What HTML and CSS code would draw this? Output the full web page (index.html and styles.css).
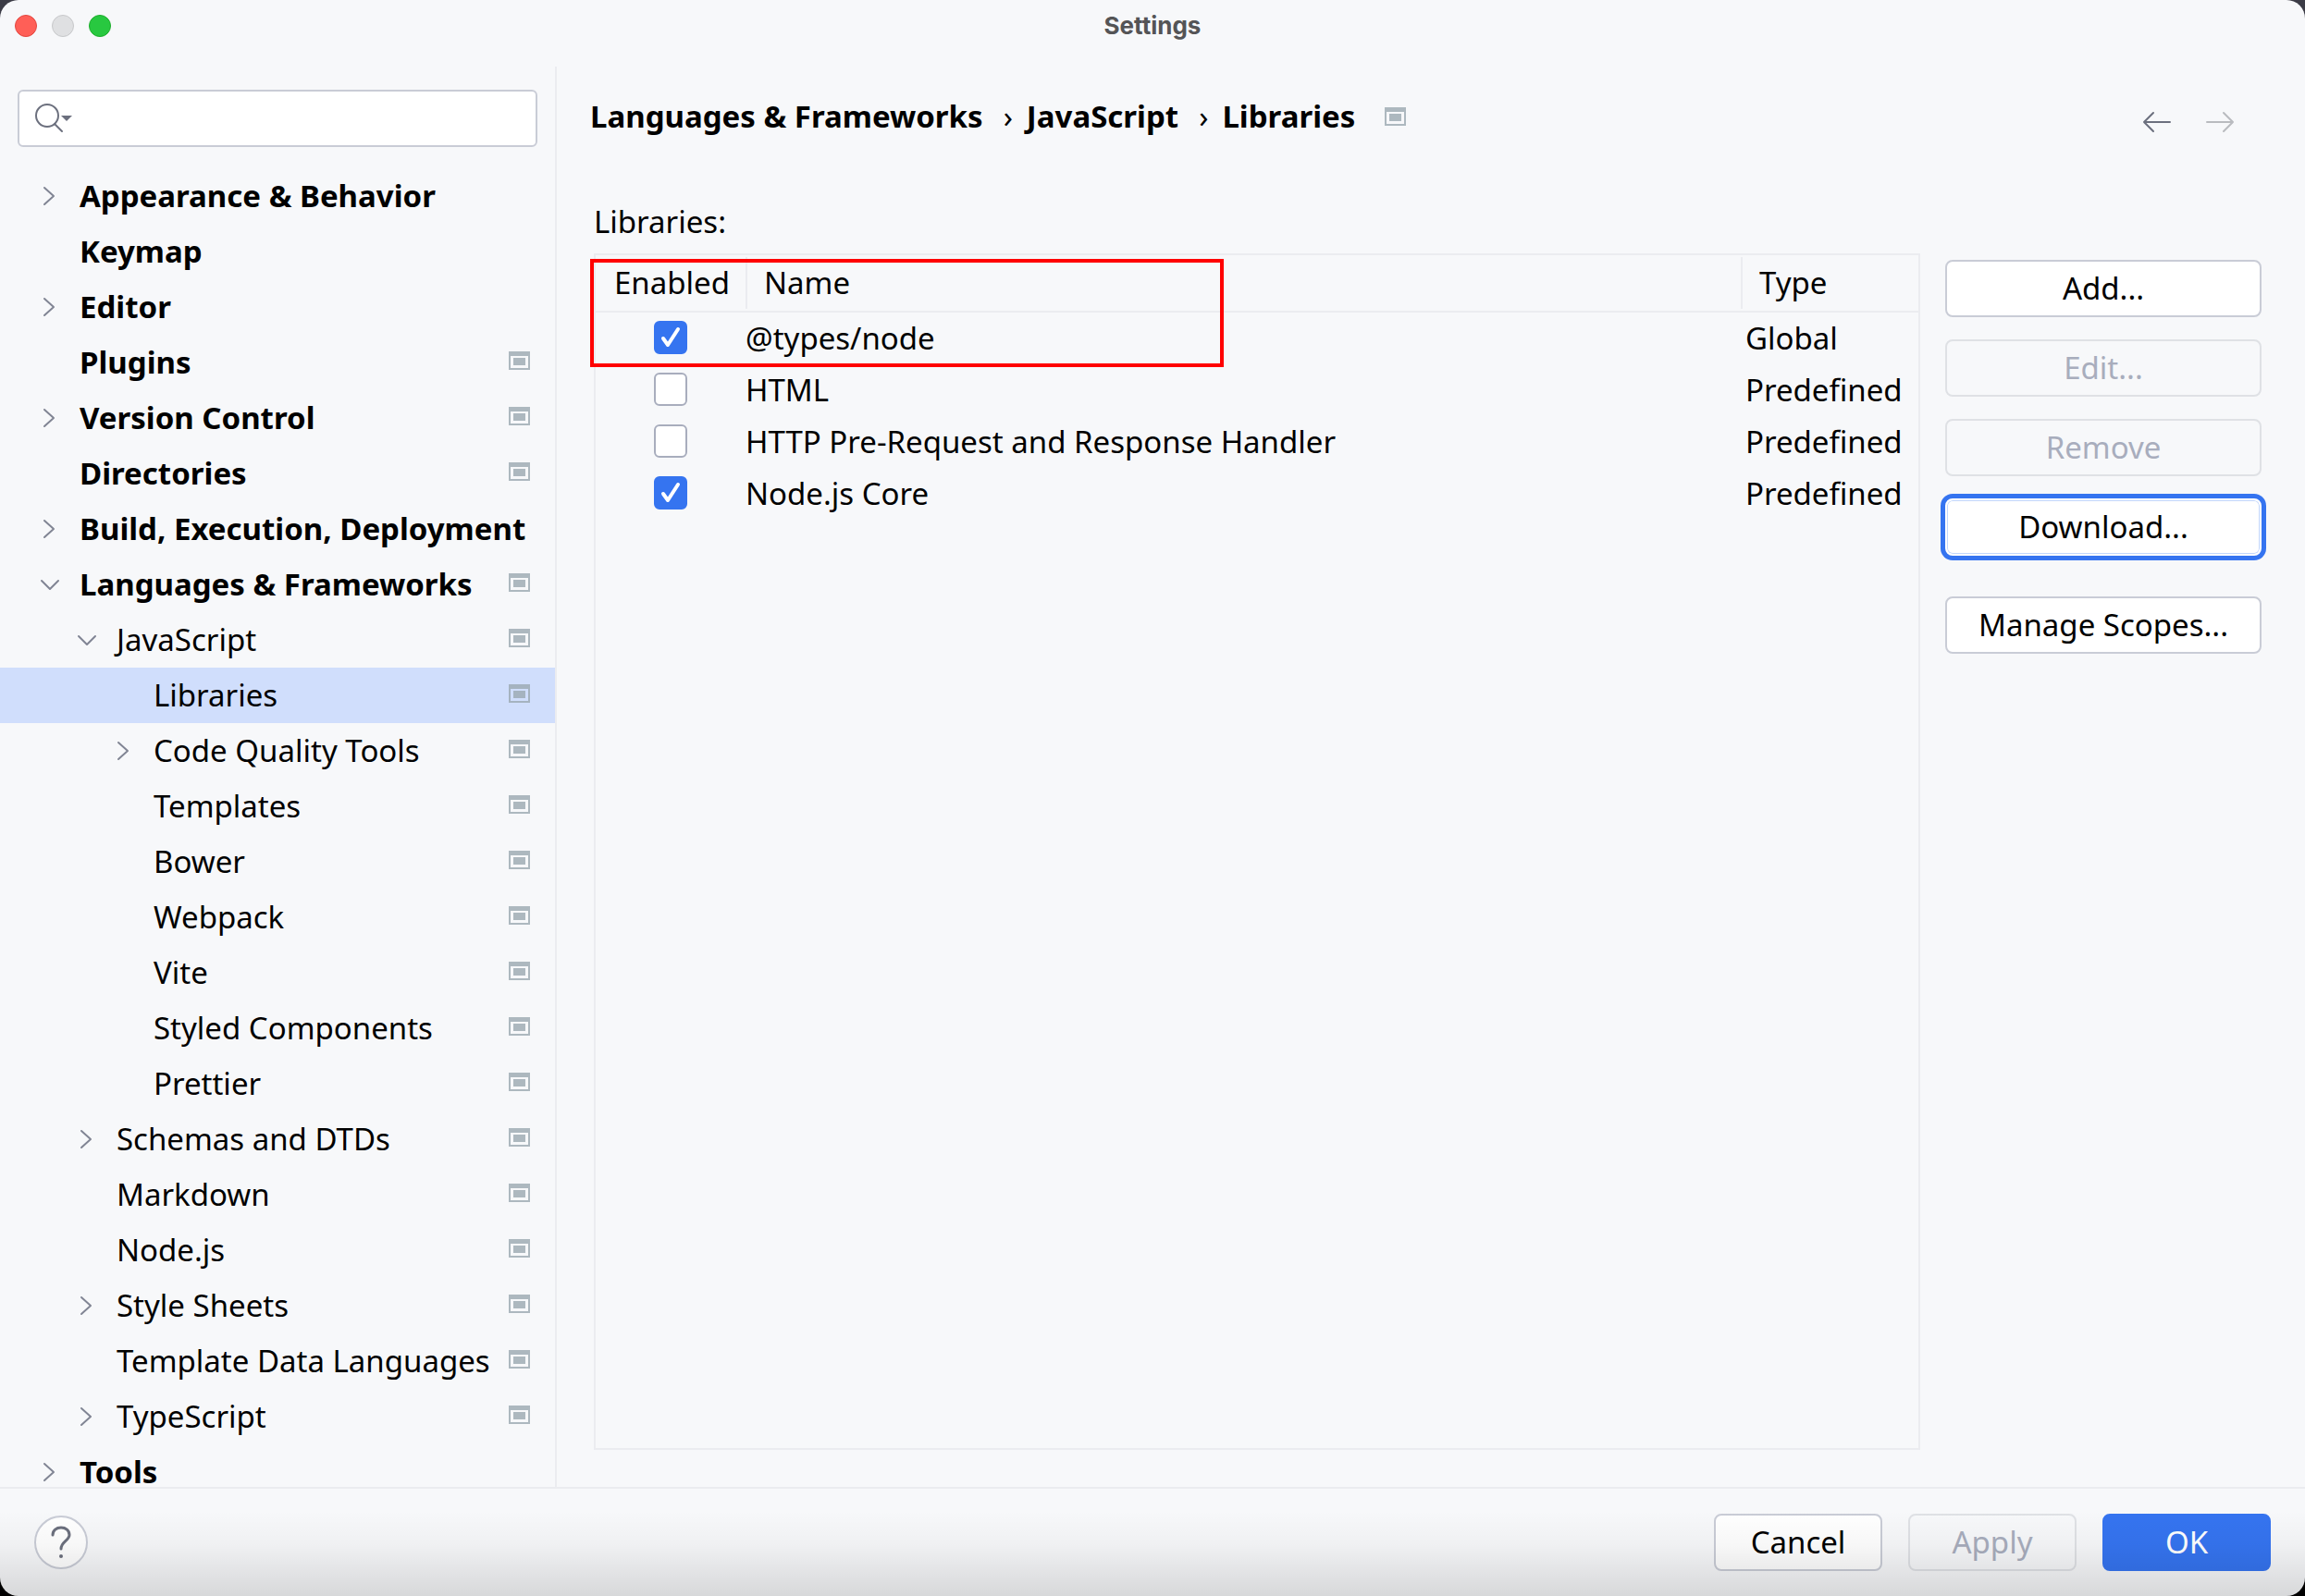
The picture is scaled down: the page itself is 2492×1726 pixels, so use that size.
FILE: index.html
```html
<!DOCTYPE html>
<html lang="en">
<head>
<meta charset="utf-8">
<title>Settings</title>
<link rel="stylesheet" href="styles.css">
</head>
<body>
<svg class="sprite" aria-hidden="true">
  <symbol id="right" viewBox="0 0 24 24"><path d="M6 3l10 9-10 9" fill="none" stroke="#818594" stroke-width="2" stroke-linecap="round" stroke-linejoin="round"/></symbol>
  <symbol id="down" viewBox="0 0 24 24"><path d="M3 8l9 9 9-9" fill="none" stroke="#818594" stroke-width="2" stroke-linecap="round" stroke-linejoin="round"/></symbol>
  <symbol id="project" viewBox="0 0 24 20"><path d="M0 0h23v20H0zM2 5v13h19V5z" fill="#9aa7b0" fill-opacity=".8" fill-rule="evenodd"/><path d="M5 7h13v8H5z" fill="#9aa7b0" fill-opacity=".8"/></symbol>
</svg>
<div class="window">
  <header class="titlebar">
    <div class="lights"><button class="light close" aria-label="Close"></button><button class="light minimize" aria-label="Minimize"></button><button class="light zoom" aria-label="Zoom"></button></div>
    <h1 class="title">Settings</h1>
  </header>
  <div class="body">
    <nav class="sidebar" aria-label="Settings categories">
      <div class="search">
        <svg class="search-icon" viewBox="0 0 42 32" aria-hidden="true"><circle cx="13" cy="13" r="12" fill="none" stroke="#6c707e" stroke-width="2"/><path d="M21 22l8 8" stroke="#6c707e" stroke-width="2" stroke-linecap="round"/><path d="M28 13h12l-6 6z" fill="#6c707e"/></svg>
        <input class="search-input" type="text" aria-label="Search settings">
      </div>
      <ul class="tree">
        <li class="row top"><svg class="chev"><use href="#right"/></svg><a href="#">Appearance &amp; Behavior</a></li>
        <li class="row top"><span class="chev"></span><a href="#">Keymap</a></li>
        <li class="row top"><svg class="chev"><use href="#right"/></svg><a href="#">Editor</a></li>
        <li class="row top"><span class="chev"></span><a href="#">Plugins</a><svg class="proj"><use href="#project"/></svg></li>
        <li class="row top"><svg class="chev"><use href="#right"/></svg><a href="#">Version Control</a><svg class="proj"><use href="#project"/></svg></li>
        <li class="row top"><span class="chev"></span><a href="#">Directories</a><svg class="proj"><use href="#project"/></svg></li>
        <li class="row top"><svg class="chev"><use href="#right"/></svg><a href="#">Build, Execution, Deployment</a></li>
        <li class="row top"><svg class="chev"><use href="#down"/></svg><a href="#">Languages &amp; Frameworks</a><svg class="proj"><use href="#project"/></svg></li>
        <li class="row sub"><svg class="chev"><use href="#down"/></svg><a href="#">JavaScript</a><svg class="proj"><use href="#project"/></svg></li>
        <li class="row leaf selected"><span class="chev"></span><a href="#" aria-current="page">Libraries</a><svg class="proj"><use href="#project"/></svg></li>
        <li class="row leaf"><svg class="chev"><use href="#right"/></svg><a href="#">Code Quality Tools</a><svg class="proj"><use href="#project"/></svg></li>
        <li class="row leaf"><span class="chev"></span><a href="#">Templates</a><svg class="proj"><use href="#project"/></svg></li>
        <li class="row leaf"><span class="chev"></span><a href="#">Bower</a><svg class="proj"><use href="#project"/></svg></li>
        <li class="row leaf"><span class="chev"></span><a href="#">Webpack</a><svg class="proj"><use href="#project"/></svg></li>
        <li class="row leaf"><span class="chev"></span><a href="#">Vite</a><svg class="proj"><use href="#project"/></svg></li>
        <li class="row leaf"><span class="chev"></span><a href="#">Styled Components</a><svg class="proj"><use href="#project"/></svg></li>
        <li class="row leaf"><span class="chev"></span><a href="#">Prettier</a><svg class="proj"><use href="#project"/></svg></li>
        <li class="row sub"><svg class="chev"><use href="#right"/></svg><a href="#">Schemas and DTDs</a><svg class="proj"><use href="#project"/></svg></li>
        <li class="row sub"><span class="chev"></span><a href="#">Markdown</a><svg class="proj"><use href="#project"/></svg></li>
        <li class="row sub"><span class="chev"></span><a href="#">Node.js</a><svg class="proj"><use href="#project"/></svg></li>
        <li class="row sub"><svg class="chev"><use href="#right"/></svg><a href="#">Style Sheets</a><svg class="proj"><use href="#project"/></svg></li>
        <li class="row sub"><span class="chev"></span><a href="#">Template Data Languages</a><svg class="proj"><use href="#project"/></svg></li>
        <li class="row sub"><svg class="chev"><use href="#right"/></svg><a href="#">TypeScript</a><svg class="proj"><use href="#project"/></svg></li>
        <li class="row top"><svg class="chev"><use href="#right"/></svg><a href="#">Tools</a></li>
      </ul>
    </nav>
    <main class="content">
      <div class="path">
        <a href="#">Languages &amp; Frameworks</a><span class="sep">›</span><a href="#">JavaScript</a><span class="sep">›</span><a href="#">Libraries</a>
        <svg class="proj path-proj"><use href="#project"/></svg>
        <div class="history">
          <button class="arrow" aria-label="Back"><svg viewBox="0 0 32 24"><path d="M30 12H2M12 2L2 12l10 10" fill="none" stroke="#6c707e" stroke-width="2" stroke-linecap="round" stroke-linejoin="round"/></svg></button>
          <button class="arrow" aria-label="Forward" disabled><svg viewBox="0 0 32 24"><path d="M2 12h28M20 2l10 10-10 10" fill="none" stroke="#b9bbbf" stroke-width="2" stroke-linecap="round" stroke-linejoin="round"/></svg></button>
        </div>
      </div>
      <h2 class="label">Libraries:</h2>
      <div class="panel">
        <div class="table-box">
          <table class="table">
            <thead><tr><th class="c-enabled" scope="col"><span>Enabled</span></th><th scope="col"><span>Name</span></th><th class="c-type" scope="col"><span>Type</span></th></tr></thead>
            <tbody>
              <tr><td><input class="check" type="checkbox" id="lib1" checked></td><td><label for="lib1">@types/node</label></td><td>Global</td></tr>
              <tr><td><input class="check" type="checkbox" id="lib2"></td><td><label for="lib2">HTML</label></td><td>Predefined</td></tr>
              <tr><td><input class="check" type="checkbox" id="lib3"></td><td><label for="lib3">HTTP Pre-Request and Response Handler</label></td><td>Predefined</td></tr>
              <tr><td><input class="check" type="checkbox" id="lib4" checked></td><td><label for="lib4">Node.js Core</label></td><td>Predefined</td></tr>
            </tbody>
          </table>
          <div class="marker"></div>
        </div>
        <div class="actions">
          <button class="btn">Add...</button>
          <button class="btn" disabled>Edit...</button>
          <button class="btn" disabled>Remove</button>
          <button class="btn focused">Download...</button>
          <button class="btn scopes">Manage Scopes...</button>
        </div>
      </div>
    </main>
  </div>
  <footer class="footer">
    <button class="help" aria-label="Help"><svg viewBox="0 0 24 36"><path d="M3 10C3 5 7 2 12 2s9 3 9 8c0 6-9 7-9 15" fill="none" stroke="#6c707e" stroke-width="3" stroke-linecap="round"/><circle cx="12" cy="33" r="2" fill="#6c707e"/></svg></button>
    <button class="btn wide">Cancel</button>
    <button class="btn wide" disabled>Apply</button>
    <button class="btn wide primary">OK</button>
  </footer>
</div>
</body>
</html>
```
FILE: styles.css
```css
* { box-sizing: border-box; }
body {
  margin: 0;
  background: linear-gradient(#3c3c46 50%, #000 50%);
  font-family: "Noto Sans", "Open Sans", sans-serif;
  font-size: 33px;
  line-height: 40px;
  color: #000;
}
button, input { font: inherit; color: inherit; margin: 0; padding: 0; }
a { color: inherit; text-decoration: none; white-space: nowrap; }
.sprite { position: absolute; width: 0; height: 0; }

.window {
  position: relative;
  display: flex;
  flex-direction: column;
  height: 100vh;
  background: #f7f8fa;
  border-radius: 20px;
  overflow: hidden;
}
.window::after {
  content: "";
  position: absolute;
  inset: auto 0 0;
  height: 92px;
  background: linear-gradient(rgba(0, 0, 0, 0), rgba(0, 0, 0, .03) 40%, rgba(0, 0, 0, .13));
  pointer-events: none;
}

.titlebar {
  display: grid;
  grid-template-columns: 1fr auto 1fr;
  align-items: center;
  height: 56px;
  padding: 0 16px;
}
.lights { display: flex; gap: 16px; }
.light { width: 24px; height: 24px; border: 1px solid; border-radius: 50%; }
.close { background: #ff5f57; border-color: #e2463f; }
.minimize { background: #dfe0e2; border-color: #c6c7c9; }
.zoom { background: #28c840; border-color: #1dad2b; }
.title { margin: 0; font: 700 26px/32px Inter, sans-serif; color: #545456; }

.body { display: flex; flex: 1; min-height: 0; padding-top: 16px; }
.sidebar {
  display: flex;
  flex-direction: column;
  flex: none;
  width: 602px;
  border-right: 2px solid #ebecf0;
  padding-top: 25px;
  overflow: hidden;
}
.search {
  display: flex;
  flex: none;
  align-items: center;
  height: 62px;
  margin: 0 19px 23px;
  padding-left: 17px;
  border: 2px solid #c9ccd6;
  border-radius: 6px;
  background: #fff;
}
.search-icon { width: 42px; height: 32px; }
.search-input { flex: 1; min-width: 0; border: 0; outline: 0; background: none; }

.tree { list-style: none; margin: 0; padding: 0; }
.row { display: flex; align-items: center; height: 60px; padding: 0 26px 0 42px; line-height: 32px; }
.top { font-weight: 700; }
.sub { padding-left: 82px; }
.leaf { padding-left: 122px; }
.selected { background: #d0defc; }
.chev { flex: none; width: 24px; height: 24px; margin-right: 20px; }
.proj { flex: none; width: 24px; height: 20px; margin: 0 0 4px auto; }

.content { display: flex; flex-direction: column; flex: 1; min-width: 0; padding: 34px 37px 40px 36px; }
.path { display: flex; align-items: center; height: 40px; font-weight: 700; }
.sep { padding: 0 15px 0 22px; font-weight: 400; }
.path-proj { margin: 0 0 0 32px; }
.history { display: flex; gap: 36px; margin-left: auto; padding: 12px 39px 0 0; }
.arrow { width: 32px; height: 24px; border: 0; background: none; }
.arrow svg { display: block; width: 32px; height: 24px; }
.label { margin: 74px 0 14px 4px; font-size: 33px; font-weight: 400; line-height: 40px; }

.panel { display: flex; flex: 1; min-height: 0; gap: 27px; padding-left: 4px; }
.table-box { position: relative; flex: 1; border: 2px solid #ebecf0; }
.table { width: 100%; border-spacing: 0; table-layout: fixed; }
.table th, .table td { padding: 0; text-align: left; font-weight: 400; }
.table th { height: 62px; padding: 2px 0; border-bottom: 2px solid #ebecf0; }
.table th span { display: block; padding: 8px 18px; border-left: 2px solid #ebecf0; }
.table .c-enabled { width: 162px; }
.table .c-enabled span { border-color: transparent; }
.c-type { width: 192px; }
.table td { height: 56px; }
.table td:last-child { padding-left: 5px; }
.check {
  appearance: none;
  display: block;
  width: 36px;
  height: 36px;
  margin: 0 auto 2px 63px;
  border: 2px solid #a8adbd;
  border-radius: 6px;
  background: #fff;
}
.check:checked {
  border-color: #3574f0;
  background: #3574f0 url("data:image/svg+xml,%3Csvg xmlns='http://www.w3.org/2000/svg' viewBox='0 0 32 32'%3E%3Cpath d='M8 17l5 7L24 7' fill='none' stroke='%23fff' stroke-width='4' stroke-linecap='round' stroke-linejoin='round'/%3E%3C/svg%3E") center / 32px no-repeat;
}
.marker {
  position: absolute;
  left: -6px;
  top: 4px;
  width: 685px;
  height: 117px;
  border: 4px solid #ff0000;
  pointer-events: none;
}

.actions { display: flex; flex-direction: column; gap: 24px; flex: none; width: 352px; padding: 7px 10px 0 0; }
.btn {
  flex: none;
  height: 62px;
  border: 2px solid #c9ccd6;
  border-radius: 8px;
  background: #fff;
}
.btn:disabled { border-color: #dfe1e5; background: transparent; color: #a8adbd; }
.focused { border-color: #fff; box-shadow: 0 0 0 5px #3574f0, inset 0 0 0 1px #c2d6fc; }
.scopes { margin-top: 20px; }

.footer {
  display: flex;
  align-items: center;
  gap: 28px;
  height: 118px;
  padding: 0 37px;
  border-top: 2px solid #ebecf0;
}
.help { display: grid; place-items: center; width: 58px; height: 58px; margin-right: auto; border: 2px solid #c9ccd6; border-radius: 50%; background: #fff; }
.help svg { width: 24px; height: 36px; }
.wide { width: 182px; }
.primary { border-color: #3574f0; background: #3574f0; color: #fff; }
```
